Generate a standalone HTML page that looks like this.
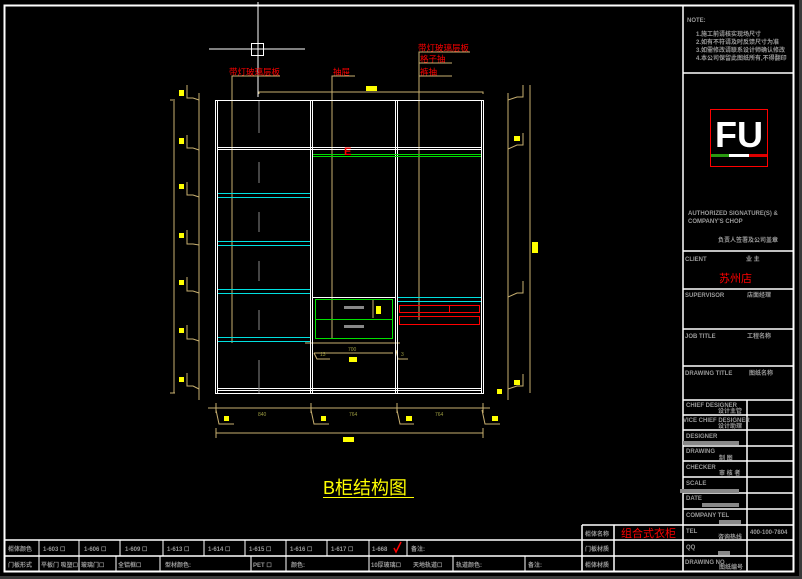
<!DOCTYPE html>
<html><head><meta charset="utf-8"><style>
html,body{margin:0;padding:0;background:#000;width:802px;height:579px;overflow:hidden}
svg{display:block}
text{font-family:"Liberation Sans","Noto Sans CJK SC",sans-serif}
.g{fill:#9a9a9a;font-size:6px;font-weight:bold}
.r{fill:#ff0000}
</style></head><body>
<svg width="802" height="579" viewBox="0 0 802 579">
<rect width="802" height="579" fill="#000"/>
<rect x="0" y="576" width="802" height="3" fill="#3a3a3a"/>
<rect x="799" y="0" width="3" height="579" fill="#3a3a3a"/>
<!-- outer frame -->
<rect x="4.5" y="5.5" width="789" height="566" fill="none" stroke="#fff" stroke-width="2"/>
<g stroke="#fff" stroke-width="1.5" fill="none">
<line x1="683" y1="5" x2="683" y2="525"/>
<line x1="683" y1="73" x2="793" y2="73"/>
<line x1="683" y1="251" x2="793" y2="251"/>
<line x1="683" y1="289" x2="793" y2="289"/>
<line x1="683" y1="329" x2="793" y2="329"/>
<line x1="683" y1="366" x2="793" y2="366"/>
<line x1="683" y1="400" x2="793" y2="400"/>
<line x1="683" y1="415" x2="793" y2="415"/>
<line x1="683" y1="430" x2="793" y2="430"/>
<line x1="683" y1="446" x2="793" y2="446"/>
<line x1="683" y1="461" x2="793" y2="461"/>
<line x1="683" y1="477" x2="793" y2="477"/>
<line x1="683" y1="493" x2="793" y2="493"/>
<line x1="683" y1="509" x2="793" y2="509"/>
<line x1="747" y1="400" x2="747" y2="571"/>
<line x1="582" y1="525" x2="793" y2="525"/>
<line x1="5" y1="540" x2="793" y2="540"/>
<line x1="5" y1="556" x2="793" y2="556"/>
<line x1="582" y1="525" x2="582" y2="571"/>
<line x1="614" y1="525" x2="614" y2="571"/>
<line x1="683" y1="525" x2="683" y2="571"/>
<g stroke-width="1">
<line x1="39" y1="540" x2="39" y2="571"/><line x1="79" y1="540" x2="79" y2="571"/>
<line x1="120" y1="540" x2="120" y2="556"/><line x1="163" y1="540" x2="163" y2="556"/>
<line x1="204" y1="540" x2="204" y2="556"/><line x1="245" y1="540" x2="245" y2="556"/>
<line x1="286" y1="540" x2="286" y2="571"/><line x1="327" y1="540" x2="327" y2="556"/>
<line x1="369" y1="540" x2="369" y2="571"/><line x1="407" y1="540" x2="407" y2="556"/>
<line x1="116" y1="556" x2="116" y2="571"/><line x1="160" y1="556" x2="160" y2="571"/>
<line x1="251" y1="556" x2="251" y2="571"/><line x1="453" y1="556" x2="453" y2="571"/>
<line x1="525" y1="556" x2="525" y2="571"/>
</g>
</g>
<!-- title block text -->
<text x="687" y="22" class="g">NOTE:</text>
<text x="696" y="36" class="g" font-size="5.5">1.施工前请核实现场尺寸</text>
<text x="696" y="44" class="g" font-size="5.5">2.如有不符请及时反馈尺寸为准</text>
<text x="696" y="52" class="g" font-size="5.5">3.如需修改请联系设计师确认修改</text>
<text x="696" y="60" class="g" font-size="5.5">4.本公司保留此图纸所有,不得翻印</text>
<rect x="710.5" y="109.5" width="57" height="57" fill="none" stroke="#f00" stroke-width="1"/>
<text x="715" y="147" fill="#fff" font-size="36" font-weight="bold">FU</text>
<rect x="711" y="154" width="18" height="3" fill="#2a9a10"/>
<rect x="729" y="154" width="20" height="3" fill="#fff"/>
<rect x="749" y="154" width="18" height="3" fill="#d00"/>
<text x="688" y="215" class="g">AUTHORIZED SIGNATURE(S) &amp;</text>
<text x="688" y="223" class="g">COMPANY'S CHOP</text>
<text x="718" y="242" class="g">负责人签署及公司盖章</text>
<text x="685" y="261" class="g">CLIENT</text>
<text x="746" y="261" class="g">业 主</text>
<text x="719" y="282" class="r" font-size="11">苏州店</text>
<text x="685" y="297" class="g">SUPERVISOR</text>
<text x="747" y="297" class="g">店面经理</text>
<text x="685" y="338" class="g">JOB TITLE</text>
<text x="747" y="338" class="g">工程名称</text>
<text x="685" y="375" class="g">DRAWING TITLE</text>
<text x="749" y="375" class="g">图纸名称</text>
<text x="686" y="407" class="g" font-size="5.5">CHIEF DESIGNER</text>
<text x="718" y="413" class="g" font-size="5.5">设计主管</text>
<text x="683" y="422" class="g" font-size="5.5">VICE CHIEF DESIGNER</text>
<text x="718" y="428" class="g" font-size="5.5">设计助理</text>
<text x="686" y="438" class="g" font-size="5.5">DESIGNER</text>
<rect x="683" y="441" width="56" height="4" fill="#888"/>
<text x="686" y="453" class="g" font-size="5.5">DRAWING</text>
<text x="719" y="460" class="g" font-size="5.5">制 图</text>
<text x="686" y="469" class="g" font-size="5.5">CHECKER</text>
<text x="719" y="475" class="g" font-size="5.5">审 核 者</text>
<text x="686" y="485" class="g" font-size="5.5">SCALE</text>
<rect x="680" y="489" width="59" height="4" fill="#888"/>
<text x="686" y="500" class="g" font-size="5.5">DATE</text>
<rect x="702" y="503" width="37" height="4" fill="#888"/>
<text x="686" y="517" class="g" font-size="5.5">COMPANY TEL</text>
<rect x="719" y="520" width="22" height="4" fill="#888"/>
<text x="686" y="533" class="g" font-size="5.5">TEL</text>
<text x="718" y="539" class="g" font-size="5.5">咨询热线</text>
<text x="750" y="534" class="g" font-size="5.5">400-100-7804</text>
<text x="686" y="549" class="g" font-size="5.5">QQ</text>
<rect x="718" y="551" width="12" height="4" fill="#888"/>
<text x="685" y="564" class="g" font-size="5.5">DRAWING NO</text>
<text x="719" y="569" class="g" font-size="5.5">图纸编号</text>
<!-- bottom table -->
<text x="585" y="536" class="g">柜体名称</text>
<text x="621" y="537" class="r" font-size="11">组合式衣柜</text>
<text x="585" y="551" class="g">门板材质</text>
<text x="585" y="567" class="g">柜体材质</text>
<g class="g">
<text x="8" y="551">柜体颜色</text>
<text x="43" y="551">1-603 ☐</text><text x="84" y="551">1-606 ☐</text>
<text x="125" y="551">1-609 ☐</text><text x="167" y="551">1-613 ☐</text>
<text x="208" y="551">1-614 ☐</text><text x="249" y="551">1-615 ☐</text>
<text x="290" y="551">1-616 ☐</text><text x="331" y="551">1-617 ☐</text>
<text x="372" y="551">1-668</text>
<text x="411" y="551">备注:</text>
<text x="8" y="567">门板形式</text>
<text x="41" y="567">平板门 吸塑☐</text><text x="81" y="567">玻璃门☐</text>
<text x="118" y="567">全铝框☐</text><text x="165" y="567">型材颜色:</text>
<text x="253" y="567">PET ☐</text><text x="291" y="567">颜色:</text>
<text x="371" y="567">10厚玻璃☐</text><text x="413" y="567">天地轨道☐</text>
<text x="456" y="567">轨道颜色:</text><text x="528" y="567">备注:</text>
</g>
<path d="M394 548 l2 4 l5 -10" stroke="#f00" stroke-width="1.5" fill="none"/>
<!-- crosshair -->
<g stroke="#fff" stroke-width="1">
<line x1="258" y1="2" x2="258" y2="97"/>
<line x1="209" y1="49" x2="305" y2="49"/>
<rect x="251.5" y="43.5" width="12" height="12" fill="none"/>
</g>
<!-- labels -->
<g font-size="8.5" fill="#ff0000">
<text x="229" y="75">带灯玻璃层板</text>
<text x="333" y="75">抽屉</text>
<text x="418" y="51">带灯玻璃层板</text>
<text x="420" y="62">格子抽</text>
<text x="420" y="75">裤抽</text>
</g>
<g stroke="#c8b070" stroke-width="1" fill="none">
<polyline points="232,343 232,76 280,76"/>
<polyline points="332,339 332,76 355,76"/>
<polyline points="419,320 419,52 470,52"/>
<line x1="419" y1="63" x2="452" y2="63"/>
<line x1="419" y1="76" x2="452" y2="76"/>
<!-- top dim -->
<polyline points="259,94 259,92 483,92 483,94"/>
<!-- left dims -->
<line x1="174" y1="101" x2="174" y2="393"/>
<line x1="170" y1="100" x2="175" y2="100"/>
<line x1="170" y1="393" x2="175" y2="393"/>
<line x1="199" y1="93" x2="199" y2="400"/>
<polyline points="187,85 187,98 193,98 199,100"/>
<polyline points="187,135 187,148 193,148 199,150"/>
<polyline points="187,182 187,195 193,195 199,197"/>
<polyline points="187,230 187,244 193,244 199,245"/>
<polyline points="187,277 187,291 193,291 199,293"/>
<polyline points="187,325 187,339 193,339 199,341"/>
<polyline points="187,373 187,386 193,386 199,389"/>
<!-- right dims -->
<line x1="508" y1="93" x2="508" y2="400"/>
<line x1="530" y1="85" x2="530" y2="393"/>
<polyline points="523,85 523,97 517,97 508,100"/>
<polyline points="523,133 523,145 517,145 508,149"/>
<polyline points="523,281 523,293 517,293 508,297"/>
<polyline points="523,374 523,386 517,386 508,389"/>
<!-- bottom dims -->
<line x1="208" y1="408" x2="490" y2="408"/>
<polyline points="216,410 219,424 234,424"/>
<polyline points="311,410 314,424 329,424"/>
<polyline points="397,410 400,424 414,424"/>
<polyline points="482,410 485,424 500,424"/>
<line x1="216" y1="433" x2="483" y2="433"/>
<line x1="216" y1="428" x2="216" y2="438"/><line x1="483" y1="428" x2="483" y2="438"/>
<line x1="216" y1="403" x2="216" y2="413"/><line x1="311" y1="403" x2="311" y2="413"/>
<line x1="397" y1="403" x2="397" y2="413"/><line x1="483" y1="403" x2="483" y2="413"/>
<!-- drawer dims -->
<line x1="305" y1="343" x2="400" y2="343"/>
<line x1="314" y1="353" x2="393" y2="353"/>
<polyline points="314,353 317,359 330,359"/>
<polyline points="396,350 398,359 408,359"/>
<line x1="373" y1="300" x2="373" y2="318"/>
<line x1="419" y1="297" x2="419" y2="320"/>
</g>
<!-- dim text -->
<g fill="#9a9a40" font-size="5">
<text x="258" y="416">840</text><text x="349" y="416">764</text><text x="435" y="416">764</text>
<text x="348" y="351">700</text><text x="320" y="356">13</text><text x="401" y="356">3</text>
</g>
<!-- yellow markers -->
<g fill="#ffff00">
<rect x="366" y="86" width="11" height="5"/>
<rect x="179" y="90" width="5" height="6"/><rect x="179" y="138" width="5" height="6"/>
<rect x="179" y="184" width="5" height="5"/><rect x="179" y="233" width="5" height="5"/>
<rect x="179" y="280" width="5" height="5"/><rect x="179" y="328" width="5" height="5"/>
<rect x="179" y="377" width="5" height="5"/>
<rect x="514" y="136" width="6" height="5"/><rect x="532" y="242" width="6" height="11"/>
<rect x="514" y="380" width="6" height="5"/><rect x="497" y="389" width="5" height="5"/>
<rect x="224" y="416" width="5" height="5"/><rect x="321" y="416" width="5" height="5"/>
<rect x="406" y="416" width="6" height="5"/><rect x="492" y="416" width="6" height="5"/>
<rect x="343" y="437" width="11" height="5"/>
<rect x="349" y="357" width="8" height="5"/><rect x="376" y="306" width="5" height="8"/>
</g>
<!-- cabinet -->
<g stroke="#fff" stroke-width="1" fill="none">
<rect x="215.5" y="100.5" width="268" height="293"/>
<line x1="217.5" y1="101" x2="217.5" y2="393"/>
<line x1="481.5" y1="101" x2="481.5" y2="393"/>
<line x1="310.5" y1="101" x2="310.5" y2="393"/>
<line x1="312.5" y1="101" x2="312.5" y2="393"/>
<line x1="395.5" y1="101" x2="395.5" y2="393"/>
<line x1="397.5" y1="101" x2="397.5" y2="393"/>
<line x1="217" y1="147.5" x2="481" y2="147.5"/>
<line x1="217" y1="149.5" x2="481" y2="149.5"/>
<line x1="217" y1="388.5" x2="481" y2="388.5"/>
<line x1="217" y1="390.5" x2="481" y2="390.5"/>
<line x1="313" y1="297.5" x2="395" y2="297.5"/>
</g>
<g stroke="#00e0e0" stroke-width="1">
<line x1="218" y1="193.5" x2="310" y2="193.5"/><line x1="218" y1="197.5" x2="310" y2="197.5"/>
<line x1="218" y1="241.5" x2="310" y2="241.5"/><line x1="218" y1="245.5" x2="310" y2="245.5"/>
<line x1="218" y1="289.5" x2="310" y2="289.5"/><line x1="218" y1="293.5" x2="310" y2="293.5"/>
<line x1="218" y1="337.5" x2="310" y2="337.5"/><line x1="218" y1="341.5" x2="310" y2="341.5"/>
<line x1="398" y1="297.5" x2="481" y2="297.5"/><line x1="398" y1="301.5" x2="481" y2="301.5"/>
</g>
<g stroke="#888" stroke-width="1">
<line x1="259" y1="101" x2="259" y2="133"/><line x1="259" y1="162" x2="259" y2="183"/>
<line x1="259" y1="212" x2="259" y2="232"/><line x1="259" y1="261" x2="259" y2="281"/>
<line x1="259" y1="310" x2="259" y2="330"/><line x1="259" y1="360" x2="259" y2="393"/>
</g>
<g stroke="#00e000" stroke-width="1" fill="none">
<line x1="313" y1="154.5" x2="481" y2="154.5"/><line x1="313" y1="156.5" x2="481" y2="156.5"/>
<rect x="315.5" y="299.5" width="77" height="39"/>
<line x1="316" y1="319.5" x2="392" y2="319.5"/>
</g>
<rect x="344" y="306" width="20" height="3" fill="#888"/>
<rect x="344" y="325" width="20" height="3" fill="#888"/>
<g stroke="#f00" stroke-width="1" fill="none">
<rect x="399.5" y="305.5" width="80" height="7"/>
<line x1="449.5" y1="305" x2="449.5" y2="312"/>
<rect x="399.5" y="316.5" width="80" height="8"/>
</g>
<text x="344" y="155" class="r" font-size="11" font-weight="bold">E</text>
<!-- title -->
<text x="323" y="494" fill="#ffff00" font-size="18" font-family="'Liberation Serif','Noto Serif CJK SC',serif">B柜结构图</text>
<line x1="323" y1="497.5" x2="414" y2="497.5" stroke="#ffff00" stroke-width="1"/>
</svg>
</body></html>
